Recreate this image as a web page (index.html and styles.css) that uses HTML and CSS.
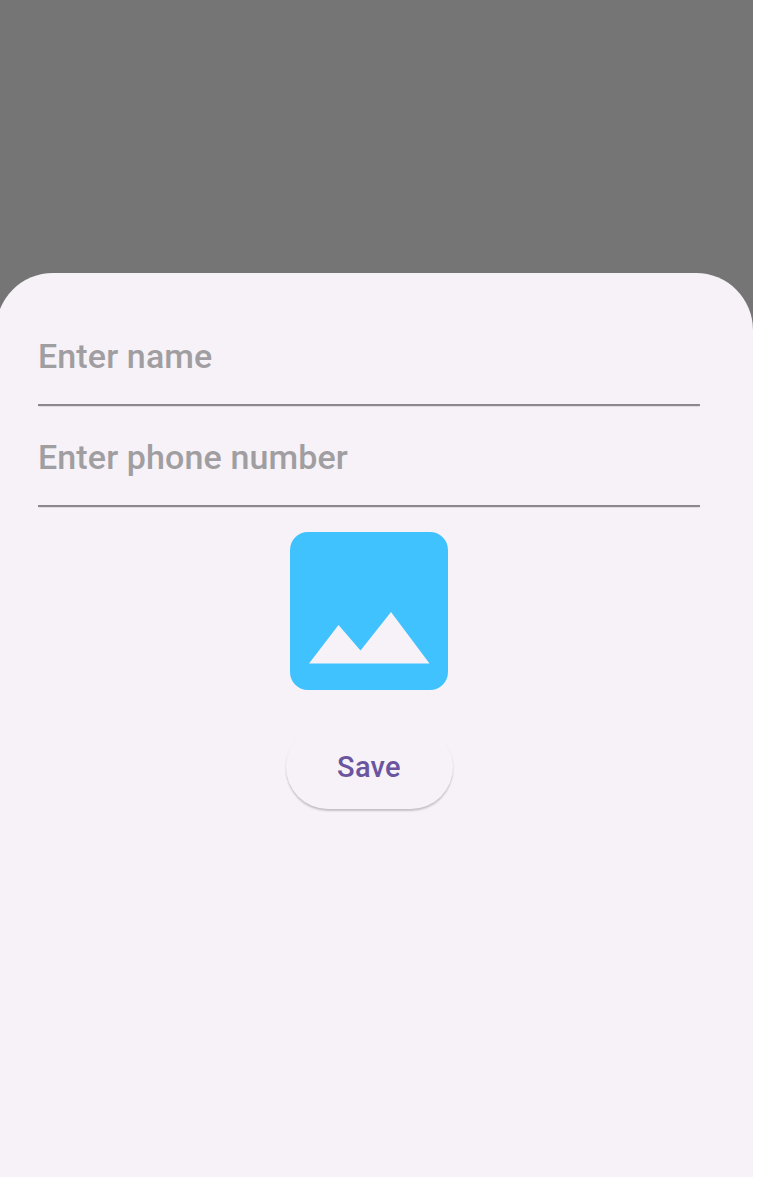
FILE: index.html
```html
<!DOCTYPE html>
<html lang="en">
<head>
<meta charset="utf-8">
<title>Add contact</title>
<link rel="stylesheet" href="styles.css">
</head>
<body>
<div class="screen">
  <main class="sheet">
    <div class="field"><span class="hint">Enter name</span></div>
    <div class="field"><span class="hint">Enter phone number</span></div>
    <svg class="photo" viewBox="0 0 158 158" aria-hidden="true">
      <path fill="#40c2ff" fill-rule="evenodd" d="M18 0H140A18 18 0 0 1 158 18V140A18 18 0 0 1 140 158H18A18 18 0 0 1 0 140V18A18 18 0 0 1 18 0ZM48.500 93L19 131.500H139.500L101 80L70.500 118.500Z"/>
    </svg>
    <button class="save" type="button">Save</button>
  </main>
</div>
</body>
</html>
```
FILE: styles.css
```css
body {
  margin: 0;
  background: #fff;
  font-family: Roboto, sans-serif;
}
.screen {
  box-sizing: border-box;
  width: 753px;
  height: 1177px;
  padding-top: 272.500px;
  background: #757575;
  overflow: hidden;
}
.sheet {
  box-sizing: border-box;
  display: flex;
  flex-direction: column;
  align-items: center;
  height: 905px;
  margin-left: -4px;
  padding: 32.500px 53px 0 42px;
  border-radius: 57px 57px 0 0;
  background: #f6f2f8;
}
.field {
  box-sizing: border-box;
  width: 662px;
  height: 101px;
  padding-top: 30.500px;
  border-bottom: 2px solid #8c898d;
  box-shadow: 0 1px 0 -0.500px rgba(140, 137, 141, 0.4);
}
.hint {
  display: block;
  font-size: 34px;
  line-height: 40px;
  font-weight: 500;
  letter-spacing: 0.120px;
  color: #a09ea1;
}
.photo {
  width: 158px;
  height: 158px;
  margin-top: 25px;
}
.save {
  width: 167px;
  height: 84px;
  margin-top: 35px;
  padding: 0;
  border: 0;
  border-radius: 42px;
  background: #f6f2f8;
  box-shadow: 0 2px 2px rgba(0, 0, 0, 0.2);
  font: 500 29px/84px Roboto, sans-serif;
  letter-spacing: 0.300px;
  color: #6a559f;
}
```
